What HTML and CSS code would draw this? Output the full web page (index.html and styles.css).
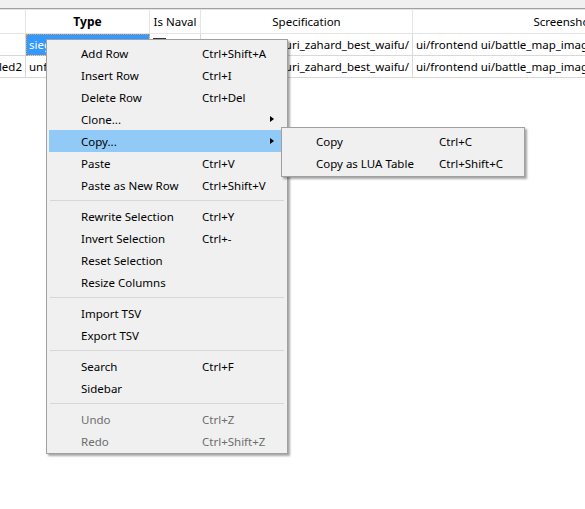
FILE: index.html
```html
<!DOCTYPE html>
<html>
<head>
<meta charset="utf-8">
<link rel="stylesheet" href="styles.css">
</head>
<body>
<div class="strip"></div>
<div class="table">
  <div class="row head">
    <div class="c c0"></div>
    <div class="c c1 b">Type</div>
    <div class="c c2 center">Is Naval</div>
    <div class="c c3 center">Specification</div>
    <div class="c c4 center">Screenshot</div>
  </div>
  <div class="row">
    <div class="c c0"></div>
    <div class="c c1 sel">siege</div>
    <div class="c c2"><span class="chk"></span></div>
    <div class="c c3 end"><span>ui/frontend/yuri_zahard_best_waifu/</span></div>
    <div class="c c4">ui/frontend ui/battle_map_images/siege.png</div>
  </div>
  <div class="row">
    <div class="c c0 end"><span>disabled2</span></div>
    <div class="c c1">unfortified</div>
    <div class="c c2"><span class="chk"></span></div>
    <div class="c c3 end"><span>ui/frontend/yuri_zahard_best_waifu/</span></div>
    <div class="c c4">ui/frontend ui/battle_map_images/siege.png</div>
  </div>
</div>

<div class="menu main">
  <div class="item"><span>Add Row</span><span>Ctrl+Shift+A</span></div>
  <div class="item"><span>Insert Row</span><span>Ctrl+I</span></div>
  <div class="item"><span>Delete Row</span><span>Ctrl+Del</span></div>
  <div class="item"><span>Clone...</span><span></span><i class="arrow"></i></div>
  <div class="item hot"><span>Copy...</span><span></span><i class="arrow"></i></div>
  <div class="item"><span>Paste</span><span>Ctrl+V</span></div>
  <div class="item"><span>Paste as New Row</span><span>Ctrl+Shift+V</span></div>
  <div class="sep"></div>
  <div class="item"><span>Rewrite Selection</span><span>Ctrl+Y</span></div>
  <div class="item"><span>Invert Selection</span><span>Ctrl+-</span></div>
  <div class="item"><span>Reset Selection</span><span></span></div>
  <div class="item"><span>Resize Columns</span><span></span></div>
  <div class="sep"></div>
  <div class="item"><span>Import TSV</span><span></span></div>
  <div class="item"><span>Export TSV</span><span></span></div>
  <div class="sep"></div>
  <div class="item"><span>Search</span><span>Ctrl+F</span></div>
  <div class="item"><span>Sidebar</span><span></span></div>
  <div class="sep"></div>
  <div class="item dis"><span>Undo</span><span>Ctrl+Z</span></div>
  <div class="item dis"><span>Redo</span><span>Ctrl+Shift+Z</span></div>
</div>

<div class="menu sub">
  <div class="item"><span>Copy</span><span>Ctrl+C</span></div>
  <div class="item"><span>Copy as LUA Table</span><span>Ctrl+Shift+C</span></div>
</div>
</body>
</html>
```

FILE: styles.css
```css
html, body {
  margin: 0;
  padding: 0;
  background: #ffffff;
  overflow: hidden;
  width: 585px;
  height: 509px;
}
body {
  font-family: "Noto Sans", "Open Sans", sans-serif;
  font-size: 11.5px;
  color: #000;
  position: relative;
}
.strip {
  height: 8px;
  background: #f0f0f0;
  border-bottom: 1px solid #a0a0a0;
}
.strip + .table {
  border-top: 1px solid #e3e3e3;
}
.table {
  width: 800px;
}
.row {
  display: flex;
  height: 22px;
}
.row.head {
  height: 24px;
}
.c {
  box-sizing: border-box;
  border-right: 1px solid #d8d8d8;
  border-bottom: 1px solid #d8d8d8;
  padding: 0 3px;
  line-height: 22px;
  white-space: nowrap;
  overflow: hidden;
  flex: none;
}
.head .c {
  line-height: 24px;
  border-right-color: #e5e5e5;
  border-bottom-color: #e5e5e5;
}
.c0 { width: 26px; }
.c1 { width: 124px; }
.c2 { width: 51px; }
.c3 { width: 212px; }
.c4 { width: 302px; }
.b { font-weight: bold; text-align: center; font-size: 12px; }
.center { text-align: center; }
.end {
  display: flex;
  justify-content: flex-end;
  padding-right: 3px;
  padding-left: 0;
}
.end span { flex: none; }
.sel {
  background: #3399ff;
  color: #fff;
  outline: 1px dotted #e89a3c;
  outline-offset: -1px;
}
.chk {
  display: inline-block;
  width: 13px;
  height: 13px;
  border: 1px solid #333;
  box-sizing: border-box;
  margin-top: 4px;
  margin-left: 0;
  vertical-align: top;
}

.menu {
  position: absolute;
  background: #f0f0f0;
  border: 1px solid #a0a0a0;
  box-shadow: 2px 2px 2px rgba(0,0,0,0.35);
  box-sizing: border-box;
  padding: 2px;
}
.main {
  left: 46px;
  top: 39px;
  width: 242px;
  height: 415px;
}
.sub {
  left: 281px;
  top: 127px;
  width: 244px;
  height: 50px;
}
.item {
  position: relative;
  display: grid;
  height: 22px;
  line-height: 24px;
  white-space: nowrap;
}
.main .item { grid-template-columns: 121px 1fr; padding-left: 32px; }
.sub .item { grid-template-columns: 123px 1fr; padding-left: 32px; }
.item.hot { background: #91c9f7; }
.item.dis { color: #6d6d6d; }
.arrow {
  position: absolute;
  left: 221px;
  top: 8px;
  width: 0;
  height: 0;
  border-left: 4px solid #000;
  border-top: 3.5px solid transparent;
  border-bottom: 3.5px solid transparent;
}
.sep {
  height: 9px;
  position: relative;
}
.sep::before {
  content: "";
  position: absolute;
  left: 1px;
  right: 1px;
  top: 4px;
  border-top: 1px solid #d7d7d7;
}
```
